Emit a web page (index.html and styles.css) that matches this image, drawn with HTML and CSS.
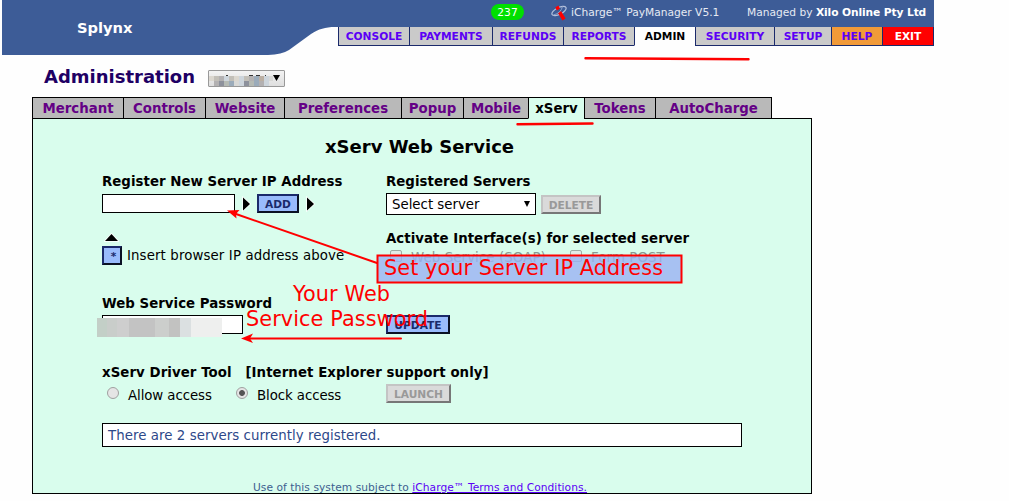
FILE: index.html
```html
<!DOCTYPE html>
<html lang="en">
<head>
<meta charset="utf-8">
<title>Administration - xServ</title>
<link rel="stylesheet" href="styles.css">
</head>
<body>
<header class="header">
  <svg class="header-shape" width="932" height="56" viewBox="0 0 932 56"><path fill="#3d5c97" d="M0 0H932V27H333C323 27 317 29 309 34L287 50Q280 54.5 266 55H0Z"/></svg>
  <div class="brand">Splynx</div>
  <div class="header-main">
    <div class="info">
      <span class="count">237</span>
      <svg class="logo" width="17" height="17" viewBox="0 0 17 17"><ellipse cx="8" cy="6" rx="7.8" ry="3.4" transform="rotate(-27 8 6)" fill="none" stroke="#b4c1dc" stroke-width="1.2"/><path d="M5.800 1.500L7.500 4.500M8.500 7L13 14.500" stroke="#f00" stroke-width="3.600"/><path d="M2.500 10Q10 8 11.500 1.500" stroke="#8fa2c9" fill="none"/></svg>
      <span class="product">iCharge™ PayManager V5.1</span>
      <span class="managed">Managed by <b>Xilo Online Pty Ltd</b></span>
    </div>
    <nav class="nav">
      <a>CONSOLE</a><a>PAYMENTS</a><a>REFUNDS</a><a>REPORTS</a><a class="current">ADMIN</a><a>SECURITY</a><a>SETUP</a><a class="help">HELP</a><a class="exit">EXIT</a>
    </nav>
  </div>
</header>
<div class="heading">
  <h1>Administration</h1>
  <div class="account">
    <svg width="75" height="15" viewBox="0 0 75 15" shape-rendering="crispEdges"><path fill="#333" d="M17 4h2v1h-2zM40 4h4v1h-4zM47 4h4v1h-4zM56 4h1v1h-1z"/><path fill="#dbd7cf" d="M0 5h5v5H0zM25 5h5v5h-5z"/><path fill="#c2bfb8" d="M5 5h5v5H5zM35 5h5v5h-5zM20 5h5v5h-5z"/><path fill="#b3b1b2" d="M10 5h5v5h-5zM40 5h5v5h-5zM5 10h5v5H5zM50 10h5v5h-5z"/><path fill="#cdd5dc" d="M15 5h5v5h-5zM30 5h5v10h-5zM55 5h5v10h-5z"/><path fill="#8d919c" d="M10 10h5v5h-5zM35 10h5v5h-5z"/><path fill="#b5bab4" d="M15 10h5v5h-5zM40 10h5v5h-5z"/><path fill="#9babba" d="M45 5h5v10h-5zM20 10h5v5h-5z"/><path fill="#bbafa3" d="M50 5h5v5h-5z"/><path fill="#d8d8d6" d="M25 10h5v5h-5zM60 5h4v5h-4z"/><path d="M64 4h7l-3.500 6z" shape-rendering="auto"/></svg>
  </div>
</div>
<nav class="tabs">
  <a>Merchant</a><a>Controls</a><a>Website</a><a>Preferences</a><a>Popup</a><a>Mobile</a><a class="current">xServ</a><a>Tokens</a><a>AutoCharge</a>
</nav>
<main class="panel">
  <h2>xServ Web Service</h2>
  <div class="form">
    <section class="register">
      <h3>Register New Server IP Address</h3>
      <div class="line">
        <span class="field ip"></span>
        <svg class="arrow" width="10" height="16" viewBox="0 0 10 16"><path d="M1 1.500L8 8L1 14.500Z" stroke="#fff" paint-order="stroke" stroke-width="1.500"/></svg>
        <span class="btn add">ADD</span>
        <svg class="arrow" width="10" height="16" viewBox="0 0 10 16"><path d="M1 1.500L8 8L1 14.500Z" stroke="#fff" paint-order="stroke" stroke-width="1.500"/></svg>
      </div>
    </section>
    <section class="registered">
      <h3>Registered Servers</h3>
      <div class="line">
        <span class="select">Select server<svg width="6" height="7" viewBox="0 0 6 7"><path d="M0 0H6L3 6Z"/></svg></span>
        <span class="btn disabled delete">DELETE</span>
      </div>
    </section>
    <section class="insert">
      <svg class="up" width="15" height="9" viewBox="0 0 15 9"><path d="M1 8L7.500 1L14 8Z" stroke="#fff" paint-order="stroke" stroke-width="1.500"/></svg>
      <div class="line"><span class="btn star">*</span><span class="insert-text">Insert browser IP address above</span></div>
    </section>
    <section class="activate">
      <h3>Activate Interface(s) for selected server</h3>
      <div class="checks"><i class="check"></i><span class="soap">Web Service (SOAP)</span><i class="check"></i><span>Form POST</span></div>
    </section>
    <section class="password">
      <h3>Web Service Password</h3>
      <div class="secret"><span class="field"></span><span class="mosaic"></span></div>
    </section>
    <section class="update"><span class="btn">UPDATE</span></section>
    <section class="driver">
      <h3>xServ Driver Tool <span>[Internet Explorer support only]</span></h3>
      <div class="line"><i class="radio"></i><span class="allow">Allow access</span><i class="radio on"></i><span class="block">Block access</span><span class="btn disabled launch">LAUNCH</span></div>
    </section>
  </div>
  <div class="status">There are 2 servers currently registered.</div>
  <footer>Use of this system subject to <a>iCharge™ Terms and Conditions.</a></footer>
</main>
<svg class="notes" width="1009" height="501" viewBox="0 0 1009 501">
  <g fill="none" stroke="#f00" stroke-width="2" stroke-linecap="round">
    <path d="M585.500 58.300L748.500 59.300" stroke-width="2.400"/>
    <path d="M517.500 124.300L592.500 123.500" stroke-width="2.400"/>
    <path d="M377 263L236 214"/>
    <path d="M401 338.500H250"/>
  </g>
  <path fill="#f00" d="M227 210.500L239.500 210L236 214L236.500 218.500ZM241 338.500L253 333.500L250 338.500L253 343Z"/>
  <rect x="377.500" y="255.500" width="304" height="27" fill="#9ab2f3" fill-opacity=".8" stroke="#f00" stroke-width="2"/>
  <g fill="#f00" font-family="DejaVu Sans, sans-serif" font-size="20.800">
    <text x="384" y="275" textLength="279">Set your Server IP Address</text>
    <text x="293" y="301" textLength="97">Your Web</text>
    <text x="246" y="326" textLength="182">Service Password</text>
  </g>
</svg>
</body>
</html>
```

FILE: styles.css
```css
* { box-sizing: border-box; }
body {
  margin: 0;
  width: 1009px;
  height: 501px;
  overflow: hidden;
  position: relative;
  background: #fefefe;
  color: #000;
  font: 13.33px/16px "DejaVu Sans", sans-serif;
}
h1, h2, h3 { margin: 0; font-weight: bold; white-space: nowrap; }

.header { display: grid; grid-template-columns: 336px 596px; height: 56px; margin-left: 2px; width: 932px; }
.header-shape { grid-area: 1 / 1 / 2 / 3; }
.brand { grid-area: 1 / 1; padding: 19px 0 0 75px; color: #fff; font-size: 14.67px; line-height: 18px; font-weight: bold; }
.header-main { grid-area: 1 / 2; }
.info { display: flex; height: 27px; color: #e6eaf3; font-size: 10.67px; line-height: 25px; white-space: nowrap; }
.info b { color: #fff; letter-spacing: -.1px; }
.count { width: 33px; height: 16px; margin: 4px 27px 0 153px; border-radius: 8px; background: #00e000; color: #fff; line-height: 17px; text-align: center; }
.logo { margin: 5px 3px 0 0; }
.product { width: 176px; }
.nav { display: grid; grid-template-columns: 71px 83px 71px 71px 61px 79px 57px 51px 52px; grid-template-rows: 19px; height: 19px; font-size: 10.67px; font-weight: bold; line-height: 19px; text-align: center; }
.nav a { border: solid #1b2a6b; border-width: 0 0 1px 1px; background: #cacaca; color: #5b00f5; }
.nav .current { background: #fefefe; color: #000; border-bottom-color: #fefefe; }
.nav .help { background: #f19a38; }
.nav .exit { background: #f00; color: #fff; border-right-width: 1px; }

.heading { display: flex; height: 41px; padding: 9px 0 0 44px; }
h1 { width: 164px; font-size: 18px; line-height: 24px; color: #1e0064; }
.account { width: 77px; height: 17px; margin-top: 5px; border: 1px solid #999; border-radius: 1px; background: linear-gradient(#f3f3f3, #dedede); }
.account svg { display: block; }

.tabs { display: grid; grid-template-columns: 91px 82px 79px 117px 62px 65px 56px 71px 117px; grid-template-rows: 22px; height: 22px; margin-left: 32px; width: 740px; text-align: center; font-weight: bold; line-height: 21px; position: relative; }
.tabs a { border: 1px solid #000; border-right: 0; background: #b9b9b9; color: #640086; }
.tabs a:last-child { border-right: 1px solid #000; }
.tabs .current { background: #d9fded; color: #000; border-bottom-color: #d9fded; }
.panel { width: 780px; height: 376px; margin: -1px 0 0 32px; border: 1px solid #000; background: #d9fded; }
h2 { padding: 16px 5px 0 0; height: 54px; font-size: 18px; line-height: 23px; text-align: center; }
h3 { font-size: 13.33px; height: 16px; line-height: 18px; letter-spacing: .03px; }
.form { display: grid; grid-template-columns: 284px 356px; grid-template-rows: 57px 65px 69px 60px; margin-left: 69px; white-space: nowrap; }
.line { display: flex; }
.field { display: block; border: 1px solid #000; background: #fff; height: 19px; }
.register .line { margin-top: 5px; }
.ip { width: 133px; }
.arrow { margin: 2px 5px 0 7px; }
.btn { display: block; height: 19px; border: 2px solid; border-color: #1b2a6b #0b1124 #0b1124 #1b2a6b; background: #99bbfc; color: #1b2a6b; font-size: 10.67px; font-weight: bold; line-height: 17px; text-align: center; }
.add { width: 42px; }
.disabled { background: #dadada; border-color: #c4c4c4 #777 #777 #c4c4c4; color: #999; }
.registered .line { margin-top: 4px; }
.select { display: flex; justify-content: space-between; width: 150px; height: 22px; padding: 3px 5px 0; border: 1px solid #000; background: #fff; }
.select svg { margin-top: 4px; }
.delete { width: 60px; margin: 2px 0 0 5px; }
.up { display: block; margin: 3px 0 0 2px; }
.star { width: 20px; padding-left: 3px; line-height: 17px; margin-right: 5px; }
.insert .line { margin-top: 4px; line-height: 19px; }
.insert-text { letter-spacing: .12px; }
.checks { display: flex; margin-top: 3px; color: #8a9a92; line-height: 18px; letter-spacing: .1px; }
.check { width: 12px; height: 12px; margin: 1px 9px 0 4px; border: 1px solid #9fada6; border-radius: 2px; background: #e2ece7; }
.soap { width: 155px; }
.secret { display: grid; grid-template-columns: 141px; margin-top: 4px; }
.secret .field { grid-area: 1 / 1; }
.mosaic { grid-area: 1 / 1; width: 125px; height: 19px; margin: 3px 0 0 -5px; background: linear-gradient(90deg, #c3cfc7 0 10px, #c9cdca 10px 20px, #cecece 20px 32px, #c3c3c3 32px 58px, #cccecc 58px 72px, #c2c2c1 72px 83px, #dbe0e1 83px 94px, #eeefee 94px); }
.update .btn { width: 64px; margin-top: 20px; }
.driver { grid-column: 1 / 3; }
.driver h3 { letter-spacing: .07px; }
.driver h3 span { margin-left: 9px; }
.driver .line { margin-top: 4px; }
.radio { width: 12px; height: 12px; margin: 3px 9px 0 5px; border: 1px solid #a0a0a0; border-radius: 50%; background: #e5e5e5; }
.radio.on { background: radial-gradient(circle, #555 0 2.500px, #e5e5e5 3.300px); }
.allow, .block { padding-top: 4px; letter-spacing: -.08px; }
.allow { width: 103px; }
.block { width: 129px; }
.launch { width: 65px; }
.status { width: 640px; height: 24px; margin: -1px 0 0 69px; padding-left: 5px; border: 1px solid #000; background: #fff; color: #2d4889; line-height: 23px; letter-spacing: .06px; }
footer { margin: 33px 0 0 220px; color: #3d6090; font-size: 10.67px; line-height: 16px; letter-spacing: .05px; }
footer a { color: #5b00f5; text-decoration: underline; }
.notes { position: absolute; inset: 0; }
```
